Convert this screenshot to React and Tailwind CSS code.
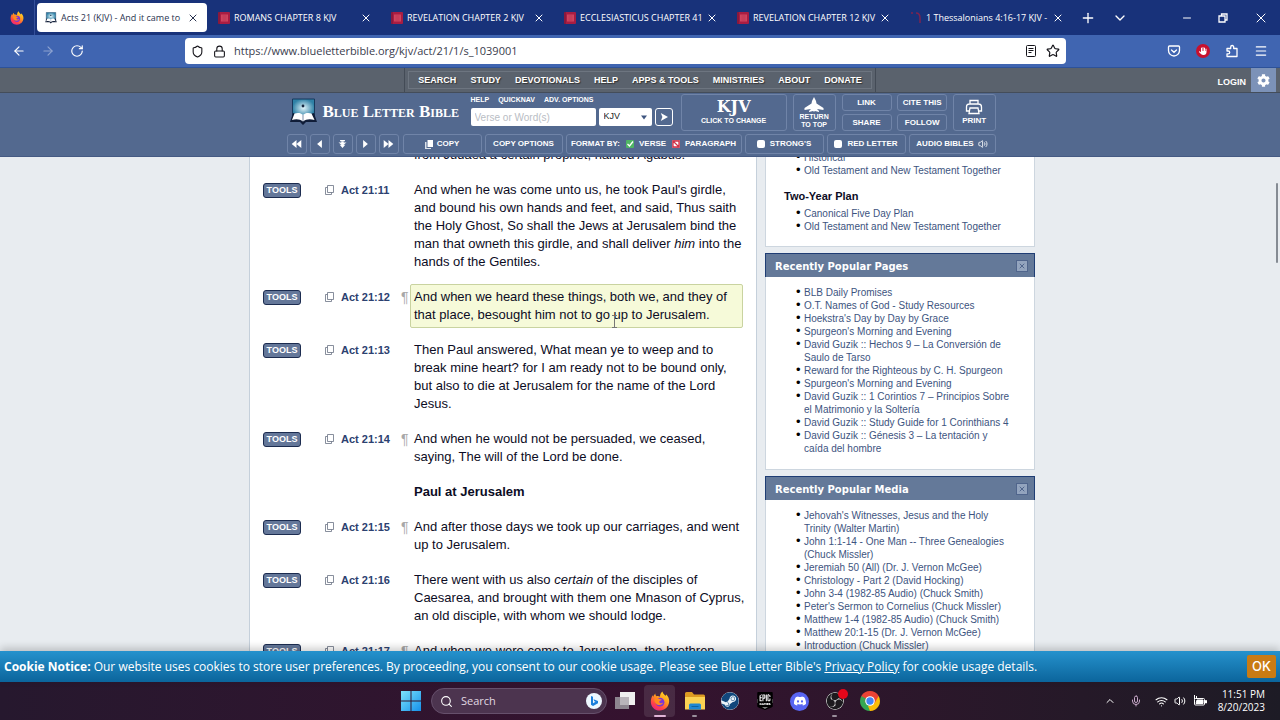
import {
  ArrowLeft,
  ArrowRight,
  ChevronDown,
  ChevronUp,
  Lock,
  Menu,
  Mic,
  Minus,
  Plus,
  RotateCw,
  Search,
  Shield,
  Star,
  Volume2,
  Wifi,
  X,
} from "lucide-react";
import { FaHand, FaSteam } from "react-icons/fa6";
import { FaCog } from "react-icons/fa";
import { SiDiscord, SiEpicgames, SiObsstudio } from "react-icons/si";

const tabs = [
  { title: "Acts 21 (KJV) - And it came to", icon: "blb", active: true },
  { title: "ROMANS CHAPTER 8 KJV", icon: "red" },
  { title: "REVELATION CHAPTER 2 KJV", icon: "red" },
  { title: "ECCLESIASTICUS CHAPTER 41", icon: "red" },
  { title: "REVELATION CHAPTER 12 KJV", icon: "red" },
  { title: "1 Thessalonians 4:16-17 KJV -", icon: "arc" },
];

const siteNav = [
  "SEARCH",
  "STUDY",
  "DEVOTIONALS",
  "HELP",
  "APPS & TOOLS",
  "MINISTRIES",
  "ABOUT",
  "DONATE",
];

const verses = [
  { id: "10", text: "from Judaea a certain prophet, named Agabus." },
  {
    id: "11",
    label: "Act 21:11",
    text: (
      <>
        And when he was come unto us, he took Paul's girdle, and bound his own
        hands and feet, and said, Thus saith the Holy Ghost, So shall the Jews
        at Jerusalem bind the man that owneth this girdle, and shall deliver{" "}
        <em>him</em> into the hands of the Gentiles.
      </>
    ),
  },
  {
    id: "12",
    label: "Act 21:12",
    para: true,
    highlight: true,
    text: "And when we heard these things, both we, and they of that place, besought him not to go up to Jerusalem.",
  },
  {
    id: "13",
    label: "Act 21:13",
    text: "Then Paul answered, What mean ye to weep and to break mine heart? for I am ready not to be bound only, but also to die at Jerusalem for the name of the Lord Jesus.",
  },
  {
    id: "14",
    label: "Act 21:14",
    para: true,
    text: "And when he would not be persuaded, we ceased, saying, The will of the Lord be done.",
  },
  { id: "heading", text: <strong>Paul at Jerusalem</strong> },
  {
    id: "15",
    label: "Act 21:15",
    para: true,
    text: "And after those days we took up our carriages, and went up to Jerusalem.",
  },
  {
    id: "16",
    label: "Act 21:16",
    text: (
      <>
        There went with us also <em>certain</em> of the disciples of Caesarea,
        and brought with them one Mnason of Cyprus, an old disciple, with whom
        we should lodge.
      </>
    ),
  },
  {
    id: "17",
    label: "Act 21:17",
    para: true,
    text: "And when we were come to Jerusalem, the brethren",
  },
];

const popularPages = [
  "BLB Daily Promises",
  "O.T. Names of God - Study Resources",
  "Hoekstra's Day by Day by Grace",
  "Spurgeon's Morning and Evening",
  "David Guzik :: Hechos 9 – La Conversión de Saulo de Tarso",
  "Reward for the Righteous by C. H. Spurgeon",
  "Spurgeon's Morning and Evening",
  "David Guzik :: 1 Corintios 7 – Principios Sobre el Matrimonio y la Soltería",
  "David Guzik :: Study Guide for 1 Corinthians 4",
  "David Guzik :: Génesis 3 – La tentación y caída del hombre",
];

const popularMedia = [
  "Jehovah's Witnesses, Jesus and the Holy Trinity (Walter Martin)",
  "John 1:1-14 - One Man -- Three Genealogies (Chuck Missler)",
  "Jeremiah 50 (All) (Dr. J. Vernon McGee)",
  "Christology - Part 2 (David Hocking)",
  "John 3-4 (1982-85 Audio) (Chuck Smith)",
  "Peter's Sermon to Cornelius (Chuck Missler)",
  "Matthew 1-4 (1982-85 Audio) (Chuck Smith)",
  "Matthew 20:1-15 (Dr. J. Vernon McGee)",
  "Introduction (Chuck Missler)",
];

function FirefoxIcon({ className }) {
  return (
    <svg viewBox="0 0 24 24" className={className}>
      <defs>
        <linearGradient id="ffBody" x1="0.8" y1="0" x2="0.2" y2="1">
          <stop offset="0" stopColor="#ffe226" />
          <stop offset="0.4" stopColor="#ff9a1f" />
          <stop offset="0.75" stopColor="#ff4048" />
          <stop offset="1" stopColor="#e5228c" />
        </linearGradient>
      </defs>
      <path
        d="M15 .5c.4 2.600 2.300 3.600 3.800 5.300.5-.4.6-1 .5-1.800C22 6.500 23.300 9.600 23 13c-.5 6-5.200 10.500-11.200 10.500C5.500 23.500 1 18.700 1 12.800 1 9.500 2 7.300 3.300 5.200l.6 1.900C4.300 5.300 5.400 4 6.500 3c-.2 1.300.2 2.400 1.300 3.200 1.800-.3 3.200 0 4.200.8C11.900 4.300 13 1.800 15 .5z"
        fill="url(#ffBody)"
      />
      <circle cx="12" cy="13.400" r="5.300" fill="#7a35d8" />
      <path
        d="M5.500 9.200c2-1.500 4.500-.8 5.800.5l2.800.5c-.2 1.200-2.600 1.600-3 2.300-.2 2 2.400 3 4.600 1.400-.7 3-5.700 4.300-8.600 1.200-1.500-1.600-2.200-4-1.600-5.900z"
        fill="#ff8a1e"
      />
    </svg>
  );
}

function BlbLogo({ className }) {
  return (
    <svg viewBox="0 0 27 28" className={className}>
      <defs>
        <radialGradient id="blbSky">
          <stop offset="0" stopColor="#e2f5fa" />
          <stop offset="1" stopColor="#2f81a6" />
        </radialGradient>
      </defs>
      <path d="M2.500 1h22v18h-22z" fill="url(#blbSky)" stroke="#17395c" />
      <circle cx="13" cy="8" r="1.400" fill="#15273f" />
      <path d="M3 15L0 24h10l3 3 3-3h11l-3-9-11 3z" fill="#101d38" />
      <path
        d="M13 17c-2-2.500-6-2.500-8.500-1.500L2 22c4-1.500 8-1 11 1.500 3-2.500 7-3 11.500-1.500l-3-6.500C19 14.500 15 14.500 13 17z"
        fill="#fff"
      />
      <path d="M13 17v6" stroke="#7b8ca8" />
    </svg>
  );
}

function TabIcon({ type }) {
  if (type === "blb") return <BlbLogo className="size-3 shrink-0" />;
  if (type === "arc") {
    return (
      <svg
        viewBox="0 0 12 12"
        className="size-3 shrink-0"
        fill="none"
        stroke="#7c2350"
      >
        <path d="M1 1h2M6 1c3 0 4 2 4 5v5" strokeWidth="1.500" />
      </svg>
    );
  }
  return (
    <svg viewBox="0 0 12 12" className="size-3 shrink-0">
      <rect width="12" height="12" rx="1" fill="#a91d42" />
      <path d="M1 0v12" stroke="#6c1738" />
      <rect x="3" y="2.500" width="7" height="7" fill="#cf4560" />
      <path d="M4.500 4h4M4.500 6h4M4.500 8h4" stroke="#b52c4b" strokeWidth=".6" />
    </svg>
  );
}

function TabBar() {
  return (
    <div className="flex h-[35px] shrink-0 items-center bg-[#18327a] text-white">
      <div className="flex h-full w-[35px] shrink-0 items-center justify-center border-r border-[#35509a]">
        <FirefoxIcon className="size-[14px]" />
      </div>
      {tabs.map((tab) => (
        <div
          key={tab.title}
          className={
            tab.active
              ? "ml-[2px] flex h-[29px] w-[170px] items-center gap-1 rounded bg-white px-2 text-[9px] text-[#2a3350]"
              : "ml-[3px] flex h-[29px] w-[170px] items-center gap-1 px-2 text-[9px] font-medium"
          }
        >
          <TabIcon type={tab.icon} />
          <span className="min-w-0 flex-1 whitespace-nowrap">{tab.title}</span>
          <button aria-label="Close tab">
            <X className="size-3" />
          </button>
        </div>
      ))}
      <button aria-label="New tab" className="ml-2">
        <Plus className="size-4" />
      </button>
      <button aria-label="List all tabs" className="ml-4">
        <ChevronDown className="size-4" />
      </button>
      <div className="ml-auto flex items-center gap-6 pr-[11px]">
        <button aria-label="Minimize">
          <Minus className="size-3" />
        </button>
        <button aria-label="Restore">
          <svg
            viewBox="0 0 12 12"
            className="size-3"
            fill="none"
            stroke="currentColor"
            strokeWidth="1.300"
          >
            <path d="M2 4h6v6H2zM4.500 4V2H10v6H8" />
          </svg>
        </button>
        <button aria-label="Close">
          <X className="size-4" strokeWidth={1.500} />
        </button>
      </div>
    </div>
  );
}

function AddressBar() {
  return (
    <div className="flex h-[33px] shrink-0 items-center border-b border-[#2d5299] bg-[#4065b1] text-white">
      <div className="flex w-[185px] shrink-0 items-center gap-[15px] pl-3">
        <button aria-label="Back">
          <ArrowLeft className="size-[14px]" />
        </button>
        <button aria-label="Forward" className="opacity-40">
          <ArrowRight className="size-[14px]" />
        </button>
        <button aria-label="Reload">
          <RotateCw className="size-[14px]" />
        </button>
      </div>
      <div className="flex h-[26px] flex-1 items-center rounded bg-white px-[6px] text-[#15141a]">
        <Shield className="size-[13px]" />
        <Lock className="ml-[9px] size-[13px]" />
        <input
          aria-label="Address"
          className="ml-2 min-w-0 flex-1 text-[11px] text-[#3a3c4d] outline-none"
          defaultValue="https://www.blueletterbible.org/kjv/act/21/1/s_1039001"
        />
        <svg
          viewBox="0 0 12 12"
          className="size-3"
          fill="none"
          stroke="currentColor"
        >
          <rect x="1.500" y="0.500" width="9" height="11" rx="1" />
          <path d="M3.500 3.500h5M3.500 5.500h5M3.500 7.500h3" />
        </svg>
        <Star className="ml-[9px] size-[14px]" />
      </div>
      <div className="flex w-[214px] shrink-0 items-center justify-end gap-[15px] pr-3">
        <button aria-label="Save to Pocket">
          <svg
            viewBox="0 0 14 14"
            className="size-[14px]"
            fill="none"
            stroke="currentColor"
            strokeWidth="1.300"
            strokeLinecap="round"
          >
            <path d="M2.500 2h9q1 0 1 1v3.500a5.500 5.500 0 0 1-11 0V3q0-1 1-1z" />
            <path d="M4.500 6L7 8.300 9.500 6" />
          </svg>
        </button>
        <button
          aria-label="Content blocker"
          className="flex size-[14px] items-center justify-center rounded-full bg-[#c8102e]"
        >
          <FaHand className="size-2" />
        </button>
        <button aria-label="Extensions">
          <svg
            viewBox="0 0 14 14"
            className="size-[14px]"
            fill="none"
            stroke="currentColor"
            strokeWidth="1.300"
            strokeLinejoin="round"
          >
            <path d="M2 12.500V9.800h1.300a1.400 1.400 0 0 0 0-2.800H2V4.500h3.700V3a1.500 1.500 0 0 1 3 0v1.500H12v8z" />
          </svg>
        </button>
        <button aria-label="Application menu">
          <Menu className="size-[14px]" />
        </button>
      </div>
    </div>
  );
}

function SiteNav() {
  return (
    <div className="grid h-[25px] shrink-0 grid-cols-[1fr_auto_1fr] border-b border-[#444d5a] bg-[#5a626d] font-['Liberation_Sans',sans-serif] text-white">
      <div />
      <nav className="flex items-center border-x border-[#434b56] px-[3px]">
        <ul className="flex h-[18px] items-center gap-[14px] border border-[#6d7580] px-[9px] pt-[2px] text-[9px] font-bold [text-shadow:1px_1px_1px_#333]">
          {siteNav.map((item) => (
            <li key={item}>
              <a href="#">{item}</a>
            </li>
          ))}
        </ul>
      </nav>
      <div className="flex items-center justify-end gap-[5px] pr-1">
        <a href="#" className="pt-[6px] text-[9px] font-bold">
          LOGIN
        </a>
        <button
          aria-label="Settings"
          className="flex h-full w-[25px] items-center justify-center bg-[#7c92b8]"
        >
          <FaCog className="size-[13px]" />
        </button>
      </div>
    </div>
  );
}

function ToolButton({ className = "", children, ...props }) {
  return (
    <button
      className={`flex items-center justify-center rounded-[3px] border border-[#7084a8] font-bold ${className}`}
      {...props}
    >
      {children}
    </button>
  );
}

function CheckOption({ label, kind }) {
  return (
    <label className="flex items-center gap-[5px]">
      <span className="grid">
        <input
          type="checkbox"
          defaultChecked={kind === "on"}
          className={
            kind === "on"
              ? "col-start-1 row-start-1 size-2 appearance-none rounded-[1px] bg-[#4fb564]"
              : kind === "off"
                ? "col-start-1 row-start-1 size-2 appearance-none rounded-[1px] bg-[#e8909c]"
                : "col-start-1 row-start-1 size-2 appearance-none rounded-[2px] bg-white"
          }
        />
        {kind === "on" && (
          <svg
            viewBox="0 0 8 8"
            className="pointer-events-none col-start-1 row-start-1 size-2"
            fill="none"
            stroke="#fff"
            strokeWidth="1.300"
          >
            <path d="M1.500 4l2 2L7 1.500" />
          </svg>
        )}
        {kind === "off" && (
          <svg
            viewBox="0 0 8 8"
            className="pointer-events-none col-start-1 row-start-1 size-2"
            fill="#fff"
            stroke="#cf3349"
            strokeWidth="1.300"
          >
            <path d="M1 1h6v6H1zM1 1l6 6" />
          </svg>
        )}
      </span>
      {label}
    </label>
  );
}

function Arrow({ d, className }) {
  return (
    <svg viewBox="0 0 12 10" className={className} fill="currentColor">
      <path d={d} />
    </svg>
  );
}

const pagerButtons = [
  ["First chapter", "M6 0v10L0 5zM12 0v10L6 5z"],
  ["Previous chapter", "M9 0v10L3 5z"],
  ["Jump down", "M3 0h6v1.500H3zM4.500 2h3v1H11L6 7 1 3h3.500zM2.500 6h7L6 10z"],
  ["Next chapter", "M3 0v10l6-5z"],
  ["Last chapter", "M0 0v10l6-5zM6 0v10l6-5z"],
];

function SiteHeader() {
  return (
    <header className="flex h-16 shrink-0 justify-center border-b border-[#455a83] bg-[#53698f] pl-[2px] font-['Liberation_Sans',sans-serif] text-white">
      <div className="w-[709px]">
        <div className="flex h-[38px] items-start pt-px">
          <a href="#" className="flex items-center gap-[6px] pt-1 pl-[3px]">
            <BlbLogo className="h-7 w-[27px]" />
            <span className="w-[148px] font-['Liberation_Serif',serif] text-[17px] leading-6 font-bold whitespace-nowrap [font-variant:small-caps]">
              Blue Letter Bible
            </span>
          </a>
          <form className="w-[210px]" onSubmit={(e) => e.preventDefault()}>
            <div className="flex h-3 items-center gap-[9px] text-[7px] font-bold">
              <a href="#">HELP</a>
              <a href="#">QUICKNAV</a>
              <a href="#">ADV. OPTIONS</a>
            </div>
            <div className="mt-[2px] flex gap-[3px]">
              <input
                aria-label="Verse or Word(s)"
                placeholder="Verse or Word(s)"
                className="h-[18px] w-[125px] rounded-[2px] bg-white px-1 text-[10px] text-black placeholder:text-[#b9bdc4]"
              />
              <span className="grid">
                <select
                  aria-label="Version"
                  className="col-start-1 row-start-1 h-[18px] w-[53px] appearance-none rounded-[2px] bg-white px-[5px] text-[9px] text-[#222]"
                >
                  <option>KJV</option>
                </select>
                <Arrow
                  d="M0 1h12L6 9z"
                  className="pointer-events-none col-start-1 row-start-1 mr-[5px] h-[5px] w-[6px] self-center justify-self-end text-[#3f5680]"
                />
              </span>
              <button
                aria-label="Go"
                className="flex size-[18px] items-center justify-center rounded-[3px] border border-white"
              >
                <Arrow d="M2 0l9 5-9 5 2-5z" className="h-2 w-[10px]" />
              </button>
            </div>
          </form>
          <div className="flex flex-1 gap-[6px]">
            <ToolButton className="h-[37px] w-[107px] flex-col text-[7px] leading-3">
              <span className="font-['DejaVu_Serif',serif] text-base leading-4">
                KJV
              </span>
              CLICK TO CHANGE
            </ToolButton>
            <ToolButton className="h-[37px] w-[43px] flex-col text-[7px] leading-2">
              <svg
                viewBox="0 0 20 15"
                className="mb-px h-[15px] w-5"
                fill="currentColor"
              >
                <path d="M10 0l2 4 .5 2.500L19.500 11v2l-6.500-1 2 2v1l-4-1-1 .8-1-.8-4 1v-1l2-2-6.500 1v-2l7-4.500L8 4z" />
              </svg>
              <span>
                RETURN
                <br />
                TO TOP
              </span>
            </ToolButton>
            <div className="grid grid-cols-2 gap-x-[6px] gap-y-[3px] text-[8px]">
              <ToolButton className="h-[17px] w-[50px]">LINK</ToolButton>
              <ToolButton className="h-[17px] w-[50px]">CITE THIS</ToolButton>
              <ToolButton className="h-[17px] w-[50px]">SHARE</ToolButton>
              <ToolButton className="h-[17px] w-[50px]">FOLLOW</ToolButton>
            </div>
            <ToolButton className="h-[37px] w-[43px] flex-col text-[8px] leading-3">
              <svg
                viewBox="0 0 18 16"
                className="h-4 w-[18px]"
                fill="none"
                stroke="currentColor"
                strokeWidth="1.300"
              >
                <path d="M5 5V1.500h8V5M4 12H1.500V8q0-3 3-3h9q3 0 3 3v4H14" />
                <path d="M5 9h8l1 5.500H4z" />
              </svg>
              PRINT
            </ToolButton>
          </div>
        </div>
        <div className="mt-[3px] flex gap-[3px] text-[8px] whitespace-nowrap">
          <div className="flex w-[113px] gap-[3px]">
            {pagerButtons.map(([label, d]) => (
              <ToolButton key={label} aria-label={label} className="h-5 w-5">
                <Arrow d={d} className="h-2 w-[11px]" />
              </ToolButton>
            ))}
          </div>
          <ToolButton className="h-5 w-[79px] gap-1">
            <svg viewBox="0 0 8 9" className="h-[9px] w-2" fill="#fff">
              <path d="M2.500 0H8v7H2.500z" />
              <path d="M0 2h1.500v6H6v1H0z" opacity=".8" />
            </svg>
            COPY
          </ToolButton>
          <ToolButton className="h-5 w-[78px]">COPY OPTIONS</ToolButton>
          <div className="flex h-5 flex-1 items-center justify-center gap-[6px] rounded-[3px] border border-[#7084a8] font-bold">
            <span>FORMAT BY:</span>
            <CheckOption label="VERSE" kind="on" />
            <CheckOption label="PARAGRAPH" kind="off" />
          </div>
          <div className="flex h-5 w-[79px] items-center justify-center rounded-[3px] border border-[#7084a8] font-bold">
            <CheckOption label="STRONG'S" />
          </div>
          <div className="flex h-5 w-[79px] items-center justify-center rounded-[3px] border border-[#7084a8] font-bold">
            <CheckOption label="RED LETTER" />
          </div>
          <ToolButton className="h-5 w-[87px] gap-1">
            AUDIO BIBLES
            <Volume2 className="size-[10px]" />
          </ToolButton>
        </div>
      </div>
    </header>
  );
}

function VerseRow({ verse }) {
  return (
    <div className="flex items-start">
      <div className="flex w-[147px] shrink-0 items-center pt-[3px]">
        {verse.label && (
          <>
            <button className="h-[15px] w-[38px] rounded-[3px] border border-[#1c2c50] bg-[#647799] text-[9px] leading-[13px] font-bold text-white">
              TOOLS
            </button>
            <svg
              viewBox="0 0 9 10"
              className="ml-6 h-[10px] w-[9px]"
              fill="none"
              stroke="#6a7284"
              strokeWidth=".8"
            >
              <path d="M2.500.5h6v7h-6zM2.500 2.500h-2v7h6v-2" />
            </svg>
            <a
              href="#"
              className="ml-[7px] w-[60px] text-[11px] leading-5 font-bold text-[#2c4170]"
            >
              {verse.label}
            </a>
            <span className="w-[9px] text-sm leading-5 text-[#a8a8a8]">
              {verse.para && "¶"}
            </span>
          </>
        )}
      </div>
      <p
        className={
          verse.highlight
            ? "w-[333px] rounded-[2px] border border-[#c9d3a0] bg-[#f6fad9] py-[3px] pl-[3px] text-[13px] leading-[18px]"
            : "w-[338px] border border-transparent py-[3px] pl-[3px] text-[13px] leading-[18px]"
        }
      >
        {verse.text}
      </p>
    </div>
  );
}

function LinkList({ items }) {
  return (
    <ul className="pr-[22px] pl-[38px] text-[10px] leading-[13px] text-black">
      {items.map((item, i) => (
        <li
          key={i}
          className="before:-ml-2 before:inline-block before:w-2 before:text-[13px] before:leading-[10px] before:content-['•']"
        >
          <a href="#" className="text-[#3d5480]">
            {item}
          </a>
        </li>
      ))}
    </ul>
  );
}

function SidePanel({ title, items }) {
  return (
    <section>
      <div className="flex h-6 items-center justify-between border border-b-0 border-[#1f3d74] bg-[#647999] pr-[6px] pl-[9px]">
        <h2 className="pt-[2px] font-['DejaVu_Sans',sans-serif] text-[10px] font-bold text-white">
          {title}
        </h2>
        <button
          aria-label={`Close ${title}`}
          className="flex size-3 items-center justify-center border border-[#50658c] bg-[#93a4be] text-[#50658c]"
        >
          <X className="size-2" strokeWidth={3} />
        </button>
      </div>
      <div className="border border-t-0 border-[#cdd6df] bg-white pt-[9px] pb-[14px]">
        <LinkList items={items} />
      </div>
    </section>
  );
}

function Sidebar() {
  return (
    <aside className="flex w-[270px] flex-col gap-[6px]">
      <section className="-mt-[6px] border border-t-0 border-[#cdd6df] bg-white pb-[13px]">
        <LinkList items={["Historical", "Old Testament and New Testament Together"]} />
        <h3 className="mt-[11px] mb-[3px] pl-[18px] text-[11px] leading-4 font-bold">
          Two-Year Plan
        </h3>
        <LinkList
          items={["Canonical Five Day Plan", "Old Testament and New Testament Together"]}
        />
      </section>
      <SidePanel title="Recently Popular Pages" items={popularPages} />
      <SidePanel title="Recently Popular Media" items={popularMedia} />
    </aside>
  );
}

function CookieBar() {
  return (
    <div className="relative flex h-[31px] shrink-0 items-center justify-between bg-linear-to-b from-[#2592cd] to-[#0b659c] px-1 text-white shadow-[0_-3px_8px_rgba(0,0,0,0.2)]">
      <p className="text-xs whitespace-nowrap">
        <strong>Cookie Notice:</strong> Our website uses cookies to store user
        preferences. By proceeding, you consent to our cookie usage. Please see
        Blue Letter Bible's{" "}
        <a href="#" className="underline">
          Privacy Policy
        </a>{" "}
        for cookie usage details.
      </p>
      <button className="h-[23px] w-[29px] rounded-[2px] bg-[#c97b14] font-['Inter',sans-serif] text-[13px] font-medium">
        OK
      </button>
    </div>
  );
}

function AppSlot({ label, running, active, children }) {
  return (
    <button
      aria-label={label}
      className={
        active
          ? "mx-[2px] grid h-8 w-[31px] place-items-center rounded bg-white/10"
          : "mx-[2px] grid h-8 w-[31px] place-items-center"
      }
    >
      <span className="col-start-1 row-start-1">{children}</span>
      {running && (
        <span
          className={
            active
              ? "col-start-1 row-start-1 h-[2px] w-3 self-end rounded bg-[#e0b4d6]"
              : "col-start-1 row-start-1 h-[2px] w-[5px] self-end rounded bg-[#9a8f9c]"
          }
        />
      )}
    </button>
  );
}

function Taskbar() {
  return (
    <footer className="grid h-[38px] shrink-0 grid-cols-[1fr_auto_1fr] items-center bg-linear-to-r from-[#26182e] via-[#35122f] to-[#1d1b25] pl-2 text-white">
      <div />
      <div className="flex items-center">
        <button aria-label="Start">
          <svg viewBox="0 0 20 20" className="size-5">
            <defs>
              <linearGradient id="winLogo" x1="0" y1="0" x2="1" y2="1">
                <stop offset="0" stopColor="#7de3fc" />
                <stop offset="1" stopColor="#1590ea" />
              </linearGradient>
            </defs>
            <path
              d="M0 0h9.500v9.500H0zM10.500 0H20v9.500h-9.500zM0 10.500h9.500V20H0zM10.500 10.500H20V20h-9.500z"
              fill="url(#winLogo)"
            />
          </svg>
        </button>
        <div className="ml-[10px] flex h-[26px] w-[176px] items-center rounded-full border border-[#66506c] bg-[#4c344f] pr-1 pl-2">
          <Search className="size-[13px]" />
          <input
            aria-label="Search"
            placeholder="Search"
            className="ml-2 min-w-0 flex-1 text-[11px] placeholder:text-[#e0d8e2]"
          />
          <svg viewBox="0 0 16 16" className="size-4">
            <circle cx="8" cy="8" r="8" fill="#eef8ff" />
            <path
              d="M5 3l2 .8v6.400l2.500-1.400-1.200-.6L7.500 6.300l4.500 1.800v2.200L7 13l-2-1.200z"
              fill="#1b7fdc"
            />
          </svg>
        </div>
        <AppSlot label="Task view">
          <svg viewBox="0 0 20 18" className="h-[18px] w-5">
            <rect x="5" y="0" width="15" height="13" fill="#efefef" />
            <rect x="0" y="5" width="14" height="12" fill="#8d858f" />
            <rect x="5" y="5" width="9" height="8" fill="#b9b4ba" />
          </svg>
        </AppSlot>
        <AppSlot label="Firefox" running active>
          <FirefoxIcon className="size-5" />
        </AppSlot>
        <AppSlot label="File Explorer" running>
          <svg viewBox="0 0 20 18" className="h-[18px] w-5">
            <path d="M0 1.500Q0 0 1.500 0H7l2 2.500h9.500Q20 2.500 20 4v13H0z" fill="#dd9b22" />
            <path d="M0 5h20v12.500H0z" fill="#fbd253" />
            <path d="M4 17.500V13q0-1.500 1.500-1.500h9Q16 11.500 16 13v4.500z" fill="#2187d3" />
            <path d="M6.500 14.500h7" stroke="#11649f" />
          </svg>
        </AppSlot>
        <AppSlot label="Steam">
          <FaSteam className="size-[18px] rounded-full bg-[#eaf3fa] text-[#11477c]" />
        </AppSlot>
        <AppSlot label="Epic Games">
          <SiEpicgames className="size-[18px] text-black [background:radial-gradient(white_60%,transparent_62%)]" />
        </AppSlot>
        <AppSlot label="Discord">
          <span className="flex size-[19px] items-center justify-center rounded-full bg-[#5865f2]">
            <SiDiscord className="size-3" />
          </span>
        </AppSlot>
        <AppSlot label="OBS Studio" running>
          <span className="relative block">
            <SiObsstudio className="size-[18px] rounded-full bg-[#1c1a1e] text-[#d8d8d8]" />
            <span className="absolute -top-[3px] -right-1 size-[10px] rounded-full bg-[#e4061a]" />
          </span>
        </AppSlot>
        <AppSlot label="Chrome">
          <svg viewBox="0 0 20 20" className="size-5">
            <path d="M10 10L1.340 5A10 10 0 0 1 18.660 5z" fill="#ea4335" />
            <path d="M10 10L18.660 5A10 10 0 0 1 10 20z" fill="#fbbc05" />
            <path d="M10 10v10A10 10 0 0 1 1.340 5z" fill="#34a853" />
            <path d="M10 5h8.660l-4.300 7.500zM5.700 12.500L1.340 5l8.660 0z" fill="#ea4335" />
            <path d="M1.340 5l4.360 7.500L10 10z" fill="#34a853" />
            <path d="M14.330 12.500L10 20l-2-5z" fill="#fbbc05" />
            <circle cx="10" cy="10" r="4.800" fill="#fff" />
            <circle cx="10" cy="10" r="3.700" fill="#4285f4" />
          </svg>
        </AppSlot>
      </div>
      <div className="flex items-center justify-end pr-[15px]">
        <ChevronUp className="size-3" />
        <Mic className="ml-[14px] size-3 text-[#c9a9c9]" />
        <Wifi className="ml-[13px] size-[13px]" />
        <Volume2 className="ml-[6px] size-3" />
        <svg
          viewBox="0 0 14 12"
          className="ml-[7px] h-3 w-[14px]"
          fill="none"
          stroke="currentColor"
        >
          <rect x="1.500" y="3.500" width="10" height="6.500" rx="1" />
          <path d="M4 5h6v3.500H3zM12.500 5.500h1v2.500h-1z" fill="currentColor" />
          <path d="M1.500 0v4M3.500 1v3" />
        </svg>
        <time className="ml-[11px] text-right text-[10px] leading-[13px]">
          11:51 PM
          <br />
          8/20/2023
        </time>
      </div>
    </footer>
  );
}

export default function App() {
  return (
    <div className="flex h-screen flex-col overflow-hidden font-['Open_Sans','Noto_Sans',sans-serif]">
      <TabBar />
      <AddressBar />
      <SiteNav />
      <SiteHeader />
      <div className="relative flex min-h-0 flex-1 justify-center overflow-hidden bg-[#e8ecf0] pl-1 font-['Liberation_Sans',sans-serif] text-[#0c0c24]">
        <main className="w-[508px] border-x border-[#c5d0db] bg-white pl-[13px]">
          <div className="-mt-[15px] flex flex-col gap-[9px]">
            {verses.map((verse) => (
              <VerseRow key={verse.id} verse={verse} />
            ))}
          </div>
        </main>
        <div className="ml-2">
          <Sidebar />
        </div>
        {/* text cursor over the highlighted verse */}
        <svg
          viewBox="0 0 7 13"
          className="absolute top-[158px] left-[611px] h-[13px] w-[7px]"
          fill="none"
          stroke="#777"
        >
          <path d="M1 .5h2M4 .5h2M3.500 1v11M1 12.500h5" />
        </svg>
        <div className="absolute top-[26px] right-[2px] h-20 w-[2px] rounded bg-[#858b93]" />
      </div>
      <CookieBar />
      <Taskbar />
    </div>
  );
}
